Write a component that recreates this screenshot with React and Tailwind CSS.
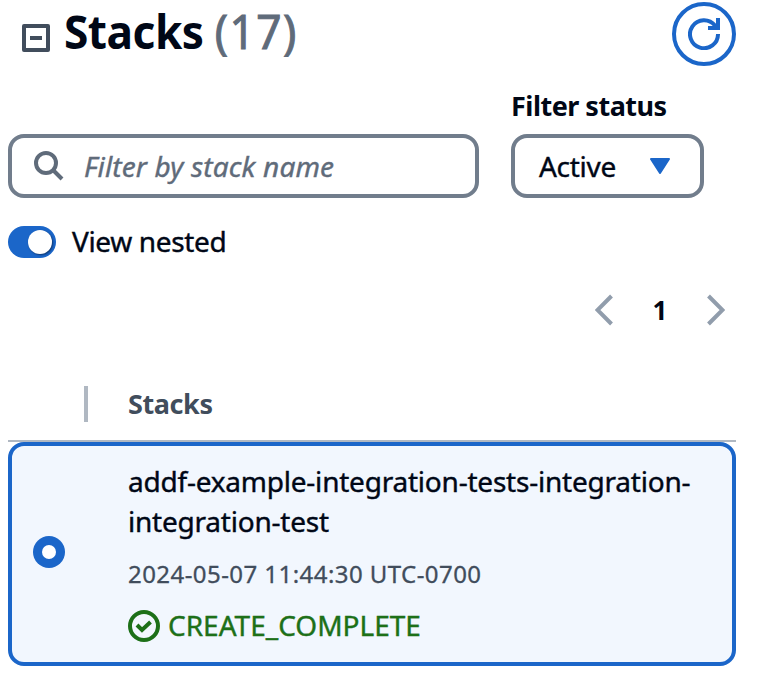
import React from "react";

function Header() {
  return (
    <header className="flex h-[66px] items-start justify-between pr-[40px]">
      <div className="flex items-start">
        <svg className="mt-[24px] ml-[22px] h-7 w-7" viewBox="0 0 28 28" fill="none" stroke="#414d5c" strokeWidth="4">
          <rect x="2" y="2" width="24" height="24" strokeLinejoin="round" />
          <path d="M8 14h12" />
        </svg>
        <h1 className="ml-[14px] flex origin-left scale-x-[0.94] text-[47px] leading-[62px] font-bold tracking-[-0.5px] whitespace-nowrap text-[#000716]">
          Stacks <span className="ml-[12px] font-normal tracking-[1.6px] text-[#5f6b7a] [-webkit-text-stroke:1px_#5f6b7a]">(17)</span>
        </h1>
      </div>
      <button className="mt-[2px] flex h-16 w-16 items-center justify-center rounded-full border-4 border-[#1b66c9]">
        <svg className="h-8 w-8" viewBox="0 0 32 32" fill="none" stroke="#1b66c9" strokeWidth="4">
          <path d="M30 16A14 14 0 1 1 27 7.500L29 10" />
          <path d="M30 0v10H20" />
        </svg>
      </button>
    </header>
  );
}

function Filters() {
  return (
    <section className="flex items-end gap-8">
      <div className="flex h-16 w-[471px] items-center rounded-[16px] border-4 border-[#717d8c] pl-[22px]">
        <svg className="h-[30px] w-[30px]" viewBox="0 0 30 30" fill="none" stroke="#5f6b7a" strokeWidth="4">
          <circle cx="12" cy="12" r="10" />
          <path d="M19 19l9 9" />
        </svg>
        <span className="ml-5 text-[28px] leading-10 tracking-[0.15px] text-[#5f6b7a] italic [-webkit-text-stroke:0.4px]">Filter by stack name</span>
      </div>
      <div className="w-[193px]">
        <div className="h-[48px] text-[27px] leading-[40px] font-bold tracking-[-0.5px] whitespace-nowrap text-[#000716]">
          Filter status
        </div>
        <div className="flex h-16 items-center justify-between rounded-[16px] border-4 border-[#717d8c] pr-[30px] pl-6">
          <span className="text-[28px] leading-10 tracking-[-0.3px] [-webkit-text-stroke:0.4px]">Active</span>
          <svg className="h-4 w-5" viewBox="0 0 20 16">
            <path d="M1 1h18L10 15z" fill="#1b66c9" stroke="#1b66c9" strokeWidth="2" strokeLinejoin="round" />
          </svg>
        </div>
      </div>
    </section>
  );
}

function Chevron({ d }) {
  return (
    <svg className="h-8 w-[18px]" viewBox="0 0 18 32" fill="none" stroke="#919dac" strokeWidth="4">
      <path d={d} />
    </svg>
  );
}

function StackRow() {
  return (
    <article className="flex h-[224px] items-start rounded-[16px] border-4 border-[#1b66c9] bg-[#f2f7fe] pl-[21px]">
      <span className="mt-[90px] flex h-8 w-8 items-center justify-center rounded-full bg-[#1b66c9]">
        <span className="h-[14px] w-[14px] rounded-full bg-white" />
      </span>
      <div className="ml-[63px] flex-1 pt-[15px] whitespace-nowrap">
        <div className="text-[28px] leading-10 tracking-[-0.22px] [-webkit-text-stroke:0.4px]">
          addf-example-integration-tests-integration-
          <br />
          integration-test
        </div>
        <div className="mt-[13px] text-[24px] leading-10 tracking-[0.44px] text-[#414d5c] [-webkit-text-stroke:0.3px]">
          2024-05-07 11:44:30 UTC-0700
        </div>
        <div className="mt-3 flex h-10 items-center text-[28px] leading-10 text-[#1d7018]">
          <svg className="mr-2 h-8 w-8" viewBox="0 0 32 32" fill="none" stroke="currentColor" strokeWidth="4">
            <circle cx="16" cy="16" r="14" />
            <path d="M9 15l5 5 8.500-8" />
          </svg>
          <span className="-mt-0.5 [-webkit-text-stroke:0.4px]">CREATE_COMPLETE</span>
        </div>
      </div>
    </article>
  );
}

export default function App() {
  return (
    <main className="h-[684px] w-[776px] bg-white pl-2 font-['Noto_Sans',sans-serif] text-[#000716]">
      <div className="-ml-2">
        <Header />
      </div>
      <div className="mt-5">
        <Filters />
      </div>
      <div className="mt-6 flex h-10 items-center">
        <span className="flex h-8 w-12 items-center justify-end rounded-full bg-[#1b66c9] pr-1">
          <span className="h-6 w-6 rounded-full bg-white shadow-[1px_1px_2px_rgba(0,7,22,0.5)]" />
        </span>
        <span className="-mt-0.5 ml-4 text-[28px] leading-10 tracking-[-0.35px] [-webkit-text-stroke:0.4px]">View nested</span>
      </div>
      <nav className="mt-7 mr-[51px] flex h-10 items-center justify-end">
        <Chevron d="M16.500 2L2.500 16l14 14" />
        <span className="mx-[39px] w-4 text-center text-[26px] leading-10 font-bold">1</span>
        <Chevron d="M1.500 2l14 14-14 14" />
      </nav>
      <div className="mt-[54px] mr-10 flex h-[58px] items-start border-b-2 border-[#b0b8c2] pl-[76px]">
        <span className="mt-[2px] h-9 w-1 bg-[#b0b8c2]" />
        <span className="ml-10 text-[27px] leading-10 font-bold tracking-[-0.4px] text-[#414d5c]">Stacks</span>
      </div>
      <div className="mr-10">
        <StackRow />
      </div>
    </main>
  );
}
